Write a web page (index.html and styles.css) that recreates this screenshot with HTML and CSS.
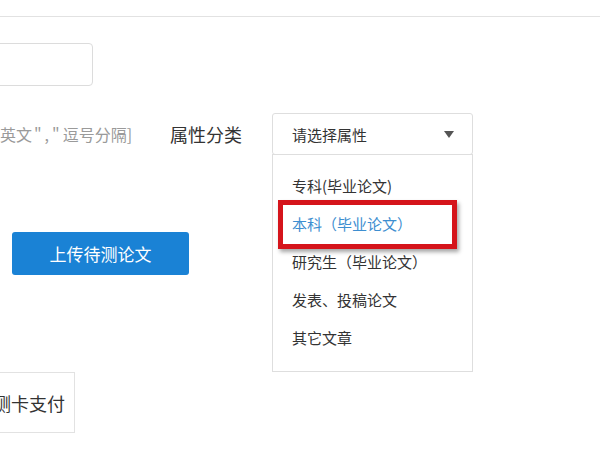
FILE: index.html
```html
<!DOCTYPE html>
<html lang="zh-CN">
<head>
<meta charset="utf-8">
<title>论文检测</title>
<link rel="stylesheet" href="styles.css">
</head>
<body>
<div class="topbar"></div>
<div class="form">
  <div class="row-input">
    <div class="text-input"></div>
  </div>
  <div class="row-attr">
    <div class="hint">英文<span class="punct">","</span>逗号分隔]</div>
    <div class="label">属性分类</div>
    <div class="select">
      <span class="select-text">请选择属性</span>
      <span class="caret"></span>
      <ul class="dropdown">
        <li class="item">专科(毕业论文)</li>
        <li class="item active">本科（毕业论文）</li>
        <li class="item">研究生（毕业论文）</li>
        <li class="item">发表、投稿论文</li>
        <li class="item">其它文章</li>
        <li class="mark"></li>
      </ul>
    </div>
  </div>
  <div class="row-btn">
    <button class="upload">上传待测论文</button>
  </div>
  <div class="row-pay">
    <div class="pay">测卡支付</div>
  </div>
</div>
</body>
</html>
```
FILE: styles.css
```css
html, body {
  margin: 0;
  padding: 0;
  background: #fff;
}
body {
  width: 600px;
  height: 450px;
  overflow: hidden;
  font-family: "Noto Sans CJK SC", "Noto Sans", sans-serif;
  color: #333;
}
.topbar {
  height: 16px;
  border-bottom: 1px solid #e2e2e2;
}
.row-input {
  margin-top: 26px;
}
.text-input {
  margin-left: -20px;
  width: 111px;
  height: 41px;
  border: 1px solid #dcdcdc;
  border-radius: 4px;
}
.row-attr {
  margin-top: 27px;
  display: flex;
  align-items: center;
  height: 42px;
}
.hint {
  width: 131px;
  text-align: right;
  white-space: nowrap;
  font-size: 16px;
  color: #9a9a9a;
}
.punct {
  letter-spacing: 3px;
  padding-left: 2px;
}
.label {
  margin-left: 39px;
  width: 102px;
  font-size: 18px;
  color: #333;
}
.select {
  position: relative;
  box-sizing: border-box;
  width: 201px;
  height: 42px;
  border: 1px solid #dedede;
  border-radius: 3px;
  display: flex;
  align-items: center;
  justify-content: space-between;
  padding: 0 18px 0 19px;
}
.select-text {
  font-size: 15px;
  color: #333;
}
.caret {
  width: 0;
  height: 0;
  border-left: 5px solid transparent;
  border-right: 5px solid transparent;
  border-top: 7px solid #555;
}
.dropdown {
  position: absolute;
  left: -1px;
  top: 40px;
  box-sizing: border-box;
  width: 201px;
  height: 218px;
  margin: 0;
  padding: 12px 0 0 0;
  list-style: none;
  background: #fff;
  border: 1px solid #dedede;
}
.item {
  height: 38px;
  line-height: 38px;
  padding-left: 19px;
  font-size: 15px;
  color: #333;
  white-space: nowrap;
}
.item.active {
  color: #3d8ed0;
}
.mark {
  position: absolute;
  left: 5px;
  top: 45px;
  box-sizing: border-box;
  width: 179px;
  height: 49px;
  border: 5px solid #d5141b;
  box-shadow: 2px 3px 4px rgba(0, 0, 0, 0.35);
}
.row-btn {
  margin-top: 77px;
}
.upload {
  display: block;
  margin-left: 12px;
  width: 177px;
  height: 43px;
  border: none;
  border-radius: 3px;
  background: #1a82d5;
  color: #fff;
  font-family: inherit;
  font-size: 17px;
  padding: 0;
}
.row-pay {
  margin-top: 97px;
}
.pay {
  margin-left: -20px;
  box-sizing: border-box;
  width: 95px;
  height: 61px;
  border: 1px solid #e2e2e2;
  display: flex;
  align-items: center;
  justify-content: flex-end;
  padding-right: 9px;
  font-size: 18px;
  color: #333;
  white-space: nowrap;
}
```
